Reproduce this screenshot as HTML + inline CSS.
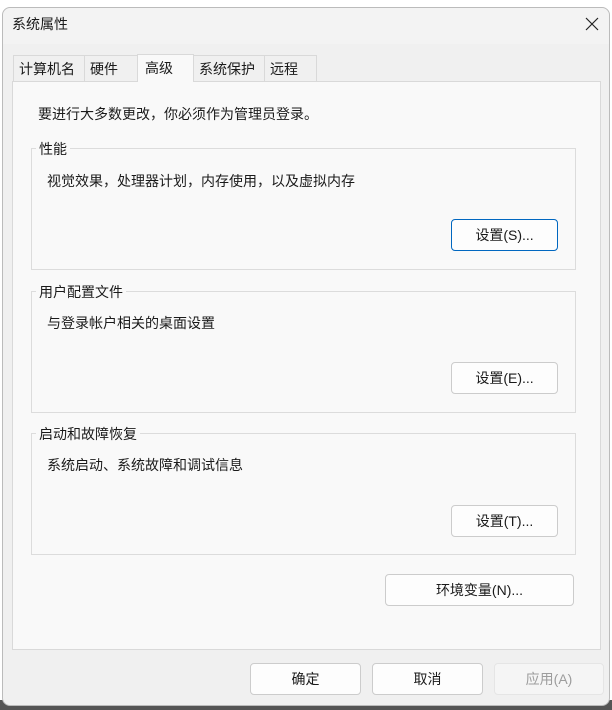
<!DOCTYPE html><html><head><meta charset="utf-8"><style>
body{margin:0;width:612px;height:710px;background:#fff;position:relative;overflow:hidden;font-family:"Liberation Sans","Noto Sans CJK SC",sans-serif;font-size:14px;color:#1a1a1a}
.win{position:absolute;left:2px;top:7px;width:608px;height:699px;background:#f0f0f0;border:1px solid #bbb;border-radius:8px;box-sizing:border-box}
.a{position:absolute}
.tab{position:absolute;top:55px;height:26px;border:1px solid #d9d9d9;border-bottom:none;background:#f0f0f0;box-sizing:border-box;padding-left:5px;line-height:26px;font-size:14px}
.panel{position:absolute;left:12px;top:81px;width:589px;height:569px;background:#f9f9f9;border:1px solid #d9d9d9;box-sizing:border-box}
.grp{position:absolute;left:31px;width:545px;height:122px;border:1px solid #dcdcdc;box-sizing:border-box}
.gl{position:absolute;background:#f9f9f9;padding:0 3px;left:36px;font-size:14px}
.btn{position:absolute;height:32px;border:1px solid #ccc;border-radius:4px;background:#fdfdfd;box-sizing:border-box;text-align:center;line-height:30px;font-size:14px}
</style></head><body>
<div class="a" style="left:0;top:700px;width:612px;height:10px;background:#555"></div>
<div class="win"></div>
<div class="a" style="left:3px;top:8px;width:606px;height:36px;background:#f3f3f3;border-radius:8px 8px 0 0"></div>
<div class="a" style="left:12px;top:14px;font-size:14px">系统属性</div>
<svg class="a" style="left:585px;top:17px" width="14" height="14"><path d="M1 1L13 13M13 1L1 13" stroke="#222" stroke-width="1.2"/></svg>
<div class="panel"></div>
<div class="tab" style="left:13px;width:72px">计算机名</div>
<div class="tab" style="left:84px;width:54px">硬件</div>
<div class="tab" style="left:193px;width:72px">系统保护</div>
<div class="tab" style="left:264px;width:53px">远程</div>
<div class="tab" style="left:137px;top:54px;width:57px;height:28px;background:#f9f9f9;line-height:26px;padding-left:7px">高级</div>
<div class="a" style="left:38px;top:104px">要进行大多数更改，你必须作为管理员登录。</div>
<div class="grp" style="top:148px"></div>
<div class="gl" style="top:139px">性能</div>
<div class="a" style="left:47px;top:171px">视觉效果，处理器计划，内存使用，以及虚拟内存</div>
<div class="btn" style="left:451px;top:219px;width:107px;border:1px solid #0067c0">设置(S)...</div>
<div class="grp" style="top:291px"></div>
<div class="gl" style="top:282px">用户配置文件</div>
<div class="a" style="left:47px;top:313px">与登录帐户相关的桌面设置</div>
<div class="btn" style="left:451px;top:362px;width:107px">设置(E)...</div>
<div class="grp" style="top:433px"></div>
<div class="gl" style="top:424px">启动和故障恢复</div>
<div class="a" style="left:47px;top:455px">系统启动、系统故障和调试信息</div>
<div class="btn" style="left:451px;top:505px;width:107px">设置(T)...</div>
<div class="btn" style="left:385px;top:574px;width:189px">环境变量(N)...</div>
<div class="btn" style="left:250px;top:663px;width:111px">确定</div>
<div class="btn" style="left:372px;top:663px;width:111px">取消</div>
<div class="btn" style="left:494px;top:663px;width:110px;color:#9d9d9d;border-color:#e5e5e5;background:#f5f5f5">应用(A)</div>
</body></html>
